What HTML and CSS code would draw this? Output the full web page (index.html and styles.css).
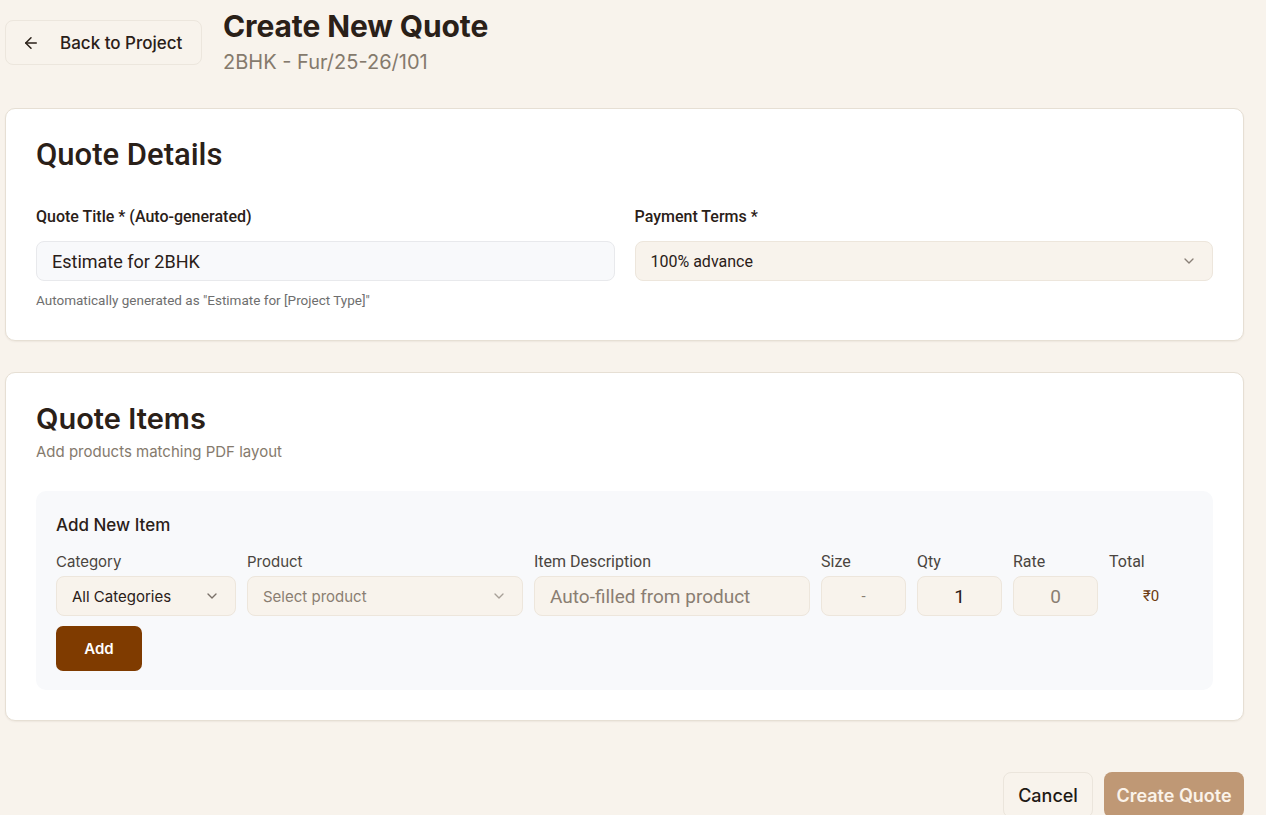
FILE: index.html
```html
<!DOCTYPE html>
<html>
<head>
<meta charset="utf-8">
<link rel="stylesheet" href="styles.css">
</head>
<body>
<div class="page">
  <header class="header">
    <button class="back-btn">
      <svg width="18" height="18" viewBox="0 0 24 24" fill="none" stroke="#2a2018" stroke-width="2" stroke-linecap="round" stroke-linejoin="round"><path d="M19 12H5"/><path d="M12 19l-7-7 7-7"/></svg>
      <span>Back to Project</span>
    </button>
    <div class="titles">
      <h1 class="title">Create New Quote</h1>
      <div class="subtitle">2BHK - Fur/25-26/101</div>
    </div>
  </header>

  <section class="card card-details">
    <h2 class="card-title roboto">Quote Details</h2>
    <div class="grid2">
      <div class="field">
        <label class="label roboto">Quote Title * (Auto-generated)</label>
        <div class="input input-gray roboto">Estimate for 2BHK</div>
        <div class="help roboto">Automatically generated as "Estimate for [Project Type]"</div>
      </div>
      <div class="field">
        <label class="label roboto">Payment Terms *</label>
        <div class="input select roboto small">
          <span>100% advance</span>
          <svg class="chev" width="16" height="16" viewBox="0 0 24 24" fill="none" stroke="#8a8078" stroke-width="2" stroke-linecap="round" stroke-linejoin="round"><path d="M6 9l6 6 6-6"/></svg>
        </div>
      </div>
    </div>
  </section>

  <section class="card card-items">
    <h2 class="card-title">Quote Items</h2>
    <div class="card-desc">Add products matching PDF layout</div>
    <div class="panel">
      <h3 class="panel-title">Add New Item</h3>
      <div class="item-row">
        <div class="col c-cat">
          <div class="col-label">Category</div>
          <div class="input select">
            <span class="dark">All Categories</span>
            <svg class="chev" width="16" height="16" viewBox="0 0 24 24" fill="none" stroke="#7a7068" stroke-width="2" stroke-linecap="round" stroke-linejoin="round"><path d="M6 9l6 6 6-6"/></svg>
          </div>
        </div>
        <div class="col c-prod">
          <div class="col-label">Product</div>
          <div class="input select">
            <span class="muted">Select product</span>
            <svg class="chev" width="16" height="16" viewBox="0 0 24 24" fill="none" stroke="#a8a098" stroke-width="2" stroke-linecap="round" stroke-linejoin="round"><path d="M6 9l6 6 6-6"/></svg>
          </div>
        </div>
        <div class="col c-desc">
          <div class="col-label roboto rl">Item Description</div>
          <div class="input roboto big muted">Auto-filled from product</div>
        </div>
        <div class="col c-size">
          <div class="col-label roboto rl">Size</div>
          <div class="input center roboto muted">-</div>
        </div>
        <div class="col c-qty">
          <div class="col-label roboto rl">Qty</div>
          <div class="input center roboto big dark">1</div>
        </div>
        <div class="col c-rate">
          <div class="col-label roboto rl">Rate</div>
          <div class="input center roboto big muted">0</div>
        </div>
        <div class="col c-total">
          <div class="col-label roboto rl">Total</div>
          <div class="total roboto">₹0</div>
        </div>
      </div>
      <button class="add-btn">Add</button>
    </div>
  </section>

  <footer class="actions">
    <button class="btn-cancel">Cancel</button>
    <button class="btn-create">Create Quote</button>
  </footer>
</div>
</body>
</html>
```

FILE: styles.css
```css
* { box-sizing: border-box; }
html, body { margin: 0; padding: 0; }
body {
  background: #f8f3ec;
  font-family: Inter, "Noto Sans", sans-serif;
  color: #2a2018;
  overflow: hidden;
}
.roboto { font-family: Roboto, Inter, sans-serif; }
.page {
  width: 1244px;
  padding: 6px 0 0 5px;
}
.header {
  display: flex;
  align-items: flex-start;
  gap: 21px;
}
.back-btn {
  margin-top: 14px;
  height: 45px;
  width: 197px;
  display: flex;
  align-items: center;
  gap: 20px;
  padding: 0 16px;
  background: #f8f3ec;
  border: 1px solid #ece6dd;
  border-radius: 8px;
  font-family: Inter, sans-serif;
  font-size: 17px;
  font-weight: 500;
  color: #2a2018;
}
.titles { display: flex; flex-direction: column; }
.title {
  margin: 0;
  font-size: 30px;
  font-weight: 700;
  line-height: 40px;
  letter-spacing: -0.1px;
  color: #2a2018;
}
.subtitle {
  font-size: 20px;
  line-height: 30px;
  color: #857a6d;
  margin-top: 1px;
}
.card {
  background: #fff;
  border: 1px solid #e6dfd4;
  border-radius: 10px;
  box-shadow: 0 1px 2px rgba(60, 40, 20, 0.06);
}
.card-details {
  margin-top: 31px;
  height: 233px;
  padding: 28px 30px 0 30px;
}
.card-title {
  margin: 0;
  font-size: 29px;
  font-weight: 600;
  line-height: 36px;
  color: #2a2018;
}
.card-details .card-title { font-weight: 500; font-size: 31px; }
.grid2 {
  display: grid;
  grid-template-columns: 1fr 1fr;
  gap: 20px;
  margin-top: 34px;
}
.field { display: flex; flex-direction: column; }
.label {
  font-size: 16px;
  font-weight: 500;
  line-height: 20px;
  margin-bottom: 14px;
  color: #2a2018;
}
.input {
  height: 40px;
  border: 1px solid #ede6dc;
  border-radius: 8px;
  background: #f8f3ec;
  display: flex;
  align-items: center;
  padding: 0 15px;
  font-size: 15px;
  color: #2a2018;
}
.input-gray { background: #f8f9fb; border-color: #e8e9ec; font-size: 18px; }
.input.small { font-size: 16px; }
.input.big { font-size: 19px; }
.select { justify-content: space-between; }
.chev { flex: none; }
.help {
  margin-top: 11px;
  font-size: 13.5px;
  color: #6e6e6e;
}
.card-items {
  margin-top: 31px;
  height: 349px;
  padding: 28px 30px 0 30px;
}
.card-desc {
  margin-top: 5px;
  font-size: 15px;
  color: #857a6d;
}
.panel {
  margin-top: 30px;
  background: #f8f9fb;
  border-radius: 10px;
  padding: 23px 20px 20px 20px;
  height: 199px;
}
.panel-title {
  margin: 0;
  font-size: 17px;
  font-weight: 500;
  line-height: 22px;
  color: #2a2018;
}
.item-row {
  display: flex;
  gap: 11px;
  margin-top: 16px;
}
.col { display: flex; flex-direction: column; }
.col-label {
  font-size: 15px;
  line-height: 20px;
  color: #4a4540;
  margin-bottom: 4px;
}
.col-label.rl { font-size: 16px; }
.c-cat { width: 180px; }
.c-prod { width: 276px; }
.c-desc { width: 276px; }
.c-size { width: 85px; }
.c-qty { width: 85px; }
.c-rate { width: 85px; }
.c-total { width: 80px; }
.center { justify-content: center; }
.dark { color: #2a2018; }
.muted { color: #8a7e72; }
.total {
  height: 40px;
  display: flex;
  align-items: center;
  padding-left: 34px;
  font-size: 15px;
  color: #6b3a10;
}
.add-btn {
  margin-top: 10px;
  width: 86px;
  height: 45px;
  border: none;
  border-radius: 7px;
  background: #7f3b00;
  color: #fff;
  font-family: Inter, sans-serif;
  font-size: 15px;
  font-weight: 600;
}
.actions {
  display: flex;
  justify-content: flex-end;
  gap: 11px;
  margin-top: 51px;
}
.btn-cancel {
  height: 46px;
  width: 90px;
  background: #f8f3ec;
  border: 1px solid #ebe5dc;
  border-radius: 8px;
  font-family: Inter, sans-serif;
  font-size: 18px;
  font-weight: 500;
  color: #1f1a15;
}
.btn-create {
  height: 46px;
  width: 140px;
  background: #bf9875;
  border: none;
  border-radius: 8px;
  font-family: Inter, sans-serif;
  font-size: 18px;
  font-weight: 600;
  color: #fbf3ea;
}
```
